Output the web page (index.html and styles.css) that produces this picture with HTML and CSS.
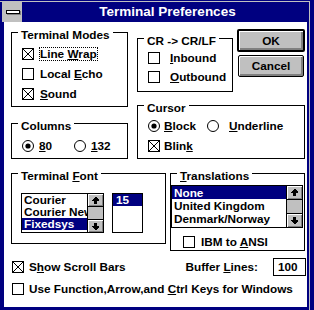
FILE: index.html
```html
<!DOCTYPE html>
<html>
<head>
    <title>Terminal Preferences</title>
    <link rel="stylesheet" href="styles.css">
</head>
<body>
<div class="window">
    <div class="titlebar">
        <div class="sysmenu"><div class="sysmenu-bar"></div></div>
        <div class="title">Terminal Preferences</div>
    </div>

    <div class="client">
        <div class="top">
            <div class="col-left">
                <div class="group modes">
                    <span class="group-label">Terminal Modes</span>
                    <div class="opts">
                        <div class="opt">
                            <svg class="box" width="12" height="12" shape-rendering="crispEdges"><rect x=".5" y=".5" width="11" height="11"/><path d="M1 1L11 11M11 1L1 11"/></svg>
                            <span class="focus">Line <u>W</u>rap</span>
                        </div>
                        <div class="opt">
                            <svg class="box" width="12" height="12" shape-rendering="crispEdges"><rect x=".5" y=".5" width="11" height="11"/></svg>
                            <span>Local <u>E</u>cho</span>
                        </div>
                        <div class="opt">
                            <svg class="box" width="12" height="12" shape-rendering="crispEdges"><rect x=".5" y=".5" width="11" height="11"/><path d="M1 1L11 11M11 1L1 11"/></svg>
                            <span><u>S</u>ound</span>
                        </div>
                    </div>
                </div>

                <div class="group columns">
                    <span class="group-label">Columns</span>
                    <div class="radios">
                        <div class="opt col-80">
                            <svg class="radio" width="12" height="12"><circle class="ring" cx="6" cy="6" r="5.5"/><circle class="dot" cx="6" cy="6" r="2.6"/></svg>
                            <span><u>8</u>0</span>
                        </div>
                        <div class="opt">
                            <svg class="radio" width="12" height="12"><circle class="ring" cx="6" cy="6" r="5.5"/></svg>
                            <span><u>1</u>32</span>
                        </div>
                    </div>
                </div>
            </div>

            <div class="col-right">
                <div class="cr-row">
                    <div class="group cr">
                        <span class="group-label">CR -&gt; CR/LF</span>
                        <div class="opts tight">
                            <div class="opt">
                                <svg class="box" width="12" height="12" shape-rendering="crispEdges"><rect x=".5" y=".5" width="11" height="11"/></svg>
                                <span><u>I</u>nbound</span>
                            </div>
                            <div class="opt">
                                <svg class="box" width="12" height="12" shape-rendering="crispEdges"><rect x=".5" y=".5" width="11" height="11"/></svg>
                                <span><u>O</u>utbound</span>
                            </div>
                        </div>
                    </div>
                    <div class="buttons">
                        <div class="btn default">OK</div>
                        <div class="btn cancel">Cancel</div>
                    </div>
                </div>

                <div class="group cursor">
                    <span class="group-label">Cursor</span>
                    <div class="opts">
                        <div class="radios">
                            <div class="opt block">
                                <svg class="radio" width="12" height="12"><circle class="ring" cx="6" cy="6" r="5.5"/><circle class="dot" cx="6" cy="6" r="2.6"/></svg>
                                <span><u>B</u>lock</span>
                            </div>
                            <div class="opt underline">
                                <svg class="radio" width="12" height="12"><circle class="ring" cx="6" cy="6" r="5.5"/></svg>
                                <span><u>U</u>nderline</span>
                            </div>
                        </div>
                        <div class="opt">
                            <svg class="box" width="12" height="12" shape-rendering="crispEdges"><rect x=".5" y=".5" width="11" height="11"/><path d="M1 1L11 11M11 1L1 11"/></svg>
                            <span>Blin<u>k</u></span>
                        </div>
                    </div>
                </div>
            </div>
        </div>

        <div class="mid">
            <div class="group font">
                <span class="group-label">Terminal <u>F</u>ont</span>
                <div class="lists">
                    <div class="listbox fontlist">
                        <div class="items">
                            <div class="item">Courier</div>
                            <div class="item">Courier New</div>
                            <div class="item sel">Fixedsys</div>
                        </div>
                        <div class="scrollbar">
                            <div class="sb-btn sb-up"><svg width="7" height="7" shape-rendering="crispEdges"><path d="M3 0h1l3 3v1H5v3H2V4H0V3z"/></svg></div>
                            <div class="sb-track"></div>
                            <div class="sb-btn sb-down"><svg width="7" height="7" shape-rendering="crispEdges"><path d="M2 0h3v3h2v1L4 7H3L0 4V3h2z"/></svg></div>
                        </div>
                    </div>
                    <div class="listbox sizelist">
                        <div class="items">
                            <div class="item sel">15</div>
                        </div>
                    </div>
                </div>
            </div>

            <div class="group trans">
                <span class="group-label"><u>T</u>ranslations</span>
                <div class="listbox translist">
                    <div class="items">
                        <div class="item sel">None</div>
                        <div class="item">United Kingdom</div>
                        <div class="item">Denmark/Norway</div>
                    </div>
                    <div class="scrollbar">
                        <div class="sb-btn sb-up"><svg width="7" height="7" shape-rendering="crispEdges"><path d="M3 0h1l3 3v1H5v3H2V4H0V3z"/></svg></div>
                        <div class="sb-track"></div>
                        <div class="sb-btn sb-down"><svg width="7" height="7" shape-rendering="crispEdges"><path d="M2 0h3v3h2v1L4 7H3L0 4V3h2z"/></svg></div>
                    </div>
                </div>
                <div class="opt ibm">
                    <svg class="box" width="12" height="12" shape-rendering="crispEdges"><rect x=".5" y=".5" width="11" height="11"/></svg>
                    <span>IBM to <u>A</u>NSI</span>
                </div>
            </div>
        </div>

        <div class="bottom-row">
            <div class="opt">
                <svg class="box" width="12" height="12" shape-rendering="crispEdges"><rect x=".5" y=".5" width="11" height="11"/><path d="M1 1L11 11M11 1L1 11"/></svg>
                <span>S<u>h</u>ow Scroll Bars</span>
            </div>
            <div class="buffer">
                <span class="buffer-label">Buffer <u>L</u>ines:</span>
                <div class="edit">100</div>
            </div>
        </div>

        <div class="bottom-row last">
            <div class="opt">
                <svg class="box" width="12" height="12" shape-rendering="crispEdges"><rect x=".5" y=".5" width="11" height="11"/></svg>
                <span>Use Function,Arrow,and <u>C</u>trl Keys for Windows</span>
            </div>
        </div>
    </div>
</div>
</body>
</html>
```

FILE: styles.css
```css
body {
    margin: 0;
    width: 314px;
    height: 310px;
    background: #000080;
    overflow: hidden;
    font-family: "Liberation Sans", Arial, sans-serif;
    font-size: 11.75px;
    font-weight: bold;
    line-height: 12px;
    color: #000;
}

u {
    text-decoration-thickness: 1px;
    text-underline-offset: 1px;
}

.window {
    width: 310px;
    height: 309px;
    margin-top: 1px;
    border-top: 1px solid #c0c0c0;
    border-right: 1px solid #c0c0c0;
    box-sizing: border-box;
    display: flex;
    flex-direction: column;
}

/* Заголовок окна */
.titlebar {
    height: 20px;
    display: flex;
    align-items: center;
}

.sysmenu {
    width: 20px;
    height: 20px;
    margin-left: 2px;
    background: #c0c0c0;
    display: flex;
    align-items: center;
    justify-content: center;
}

.sysmenu-bar {
    width: 12px;
    height: 2px;
    margin-left: 1px;
    background: #fff;
    border: 1px solid #000;
    box-shadow: 1px 1px 0 #808080;
}

.title {
    flex: 1;
    text-align: center;
    color: #fff;
    font-size: 13.5px;
    padding-left: 4px;
}

.client {
    flex: 1;
    margin: 0 2px 3px 4px;
    background: #fff;
}

/* Верхняя часть: две колонки */
.top {
    display: flex;
    padding-left: 7px;
}

.col-left {
    width: 117px;
    margin-top: 10px;
    display: flex;
    flex-direction: column;
    gap: 16px;
}

.col-right {
    width: 168px;
    margin-left: 9px;
    margin-top: 7px;
    display: flex;
    flex-direction: column;
}

.cr-row {
    display: flex;
    align-items: flex-start;
}

/* Рамки групп */
.group {
    position: relative;
    border: 1px solid #000;
    box-sizing: border-box;
}

.group-label {
    position: absolute;
    top: -4px;
    left: 6px;
    padding: 0 3px;
    background: #fff;
    white-space: nowrap;
}

.modes {
    height: 75px;
    padding: 15px 0 0 10px;
}

.columns {
    height: 36px;
    padding: 16px 0 0 10px;
}

.cr {
    width: 96px;
    height: 54px;
    margin-top: 9px;
    padding: 13px 0 0 10px;
}

.cursor {
    height: 54px;
    margin-top: 13px;
    padding: 14px 0 0 10px;
}

.opts {
    display: flex;
    flex-direction: column;
    gap: 8px;
}

.opts.tight {
    gap: 7px;
}

.opt {
    display: flex;
    align-items: center;
    height: 12px;
    gap: 6px;
    white-space: nowrap;
}

.opt svg {
    flex: none;
}

.cr .opt {
    gap: 10px;
}

.radios {
    display: flex;
}

.col-80 {
    width: 52px;
    gap: 5px;
}

.columns .opt {
    gap: 5px;
}

.cursor .opt {
    gap: 4px;
}

.cursor .block {
    width: 59px;
}

.cursor .underline {
    gap: 10px;
}

.focus {
    outline: 1px dotted #000;
}

.box rect {
    fill: #fff;
    stroke: #000;
}

.box path {
    stroke: #000;
}

.radio .ring {
    fill: #fff;
    stroke: #000;
}

.radio .dot {
    fill: #000;
}

/* Кнопки */
.buttons {
    display: flex;
    flex-direction: column;
    gap: 3px;
    margin-left: 4px;
}

.btn {
    display: flex;
    align-items: center;
    justify-content: center;
    box-sizing: border-box;
    background: #c0c0c0;
    border: 1px solid #000;
    border-radius: 2px;
    box-shadow: inset 1px 1px 0 #fff, inset -1px -1px 0 #808080, inset -2px -2px 0 #808080;
}

.btn.default {
    width: 68px;
    height: 23px;
    border-width: 2px;
}

.btn.cancel {
    width: 66px;
    height: 22px;
    margin-left: 1px;
}

/* Средняя часть: шрифт и перекодировка */
.mid {
    display: flex;
    align-items: flex-start;
    margin-top: 14px;
    padding-left: 7px;
}

.font {
    width: 155px;
    height: 71px;
    padding: 19px 0 0 9px;
}

.lists {
    display: flex;
    gap: 8px;
}

.trans {
    width: 135px;
    height: 78px;
    margin-left: 4px;
    padding-top: 11px;
}

.listbox {
    display: flex;
    border: 1px solid #000;
    box-sizing: border-box;
    background: #fff;
}

.fontlist {
    width: 83px;
    height: 40px;
}

.sizelist {
    width: 31px;
    height: 40px;
}

.translist {
    width: 132px;
    height: 43px;
}

.items {
    flex: 1;
    overflow: hidden;
}

.item {
    height: 12px;
    line-height: 12px;
    padding-left: 2px;
    white-space: nowrap;
}

.sizelist .item {
    padding-left: 3px;
}

.translist .item {
    height: 13px;
    line-height: 13px;
}

.item.sel {
    background: #000080;
    color: #fff;
}

.scrollbar {
    width: 15px;
    border-left: 1px solid #000;
    display: flex;
    flex-direction: column;
    background: #c0c0c0;
}

.sb-btn {
    height: 12px;
    display: flex;
    align-items: center;
    justify-content: center;
    box-shadow: inset 1px 1px 0 #fff, inset -1px -1px 0 #808080;
}

.translist .sb-btn {
    height: 13px;
}

.sb-up {
    border-bottom: 1px solid #000;
}

.sb-down {
    border-top: 1px solid #000;
}

.sb-track {
    flex: 1;
}

.ibm {
    margin-top: 8px;
    padding-left: 12px;
}

/* Нижние строки */
.bottom-row {
    display: flex;
    align-items: center;
    height: 18px;
    margin-top: 7px;
    padding: 0 1px 0 8px;
}

.bottom-row .opt {
    gap: 5px;
}

.bottom-row.last {
    height: 12px;
}

.buffer {
    margin-left: auto;
    display: flex;
    align-items: center;
}

.buffer-label {
    margin-right: 15px;
}

.edit {
    width: 33px;
    height: 18px;
    box-sizing: border-box;
    border: 1px solid #000;
    padding-left: 4px;
    line-height: 16px;
}
```
